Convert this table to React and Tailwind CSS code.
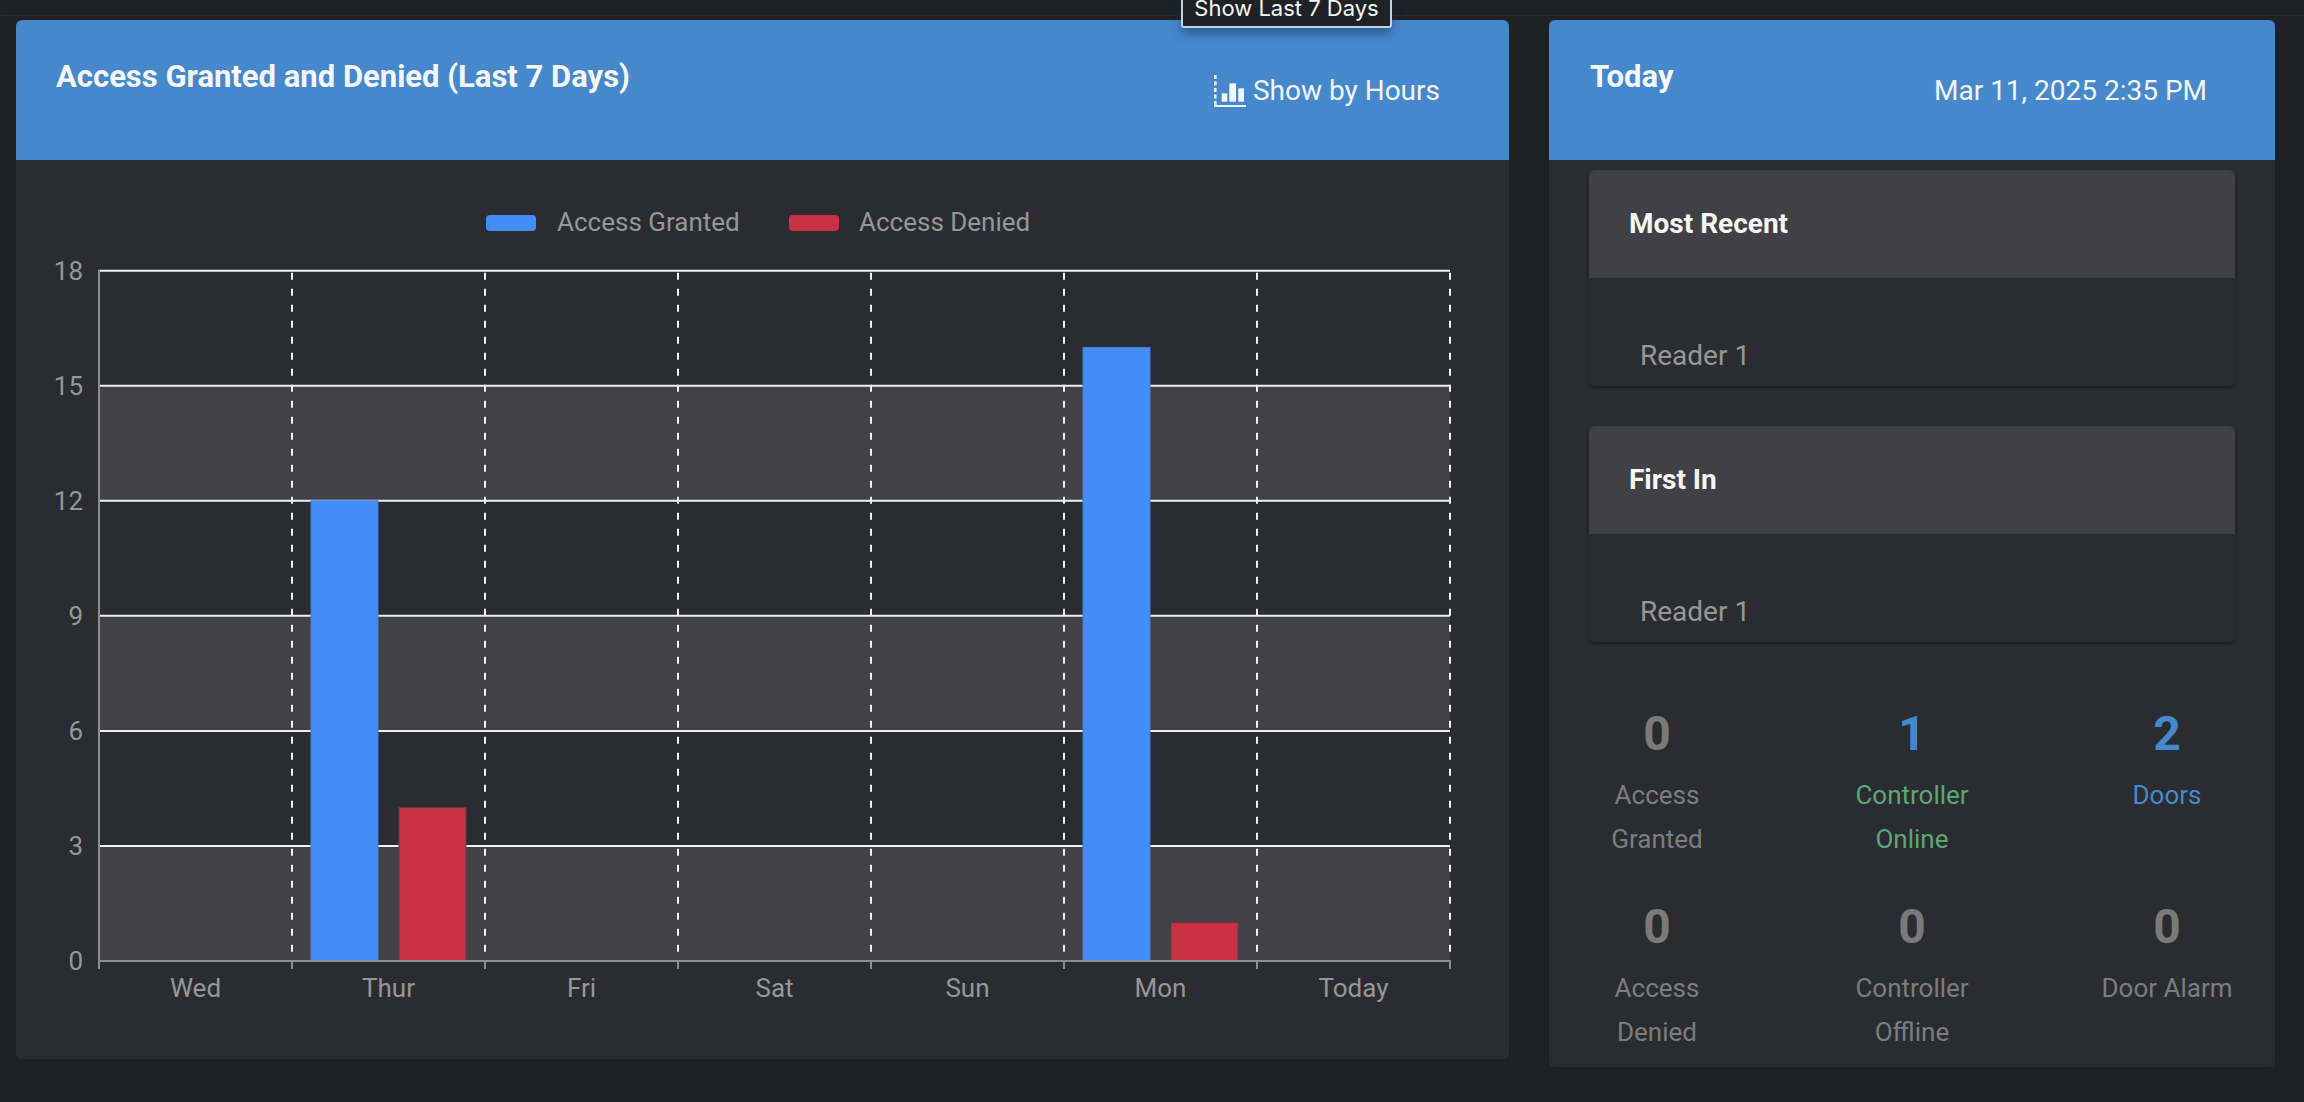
import React from "react";

const BLUE = "#458df6";
const RED = "#c93242";

const days = ["Wed", "Thur", "Fri", "Sat", "Sun", "Mon", "Today"];
const granted = [0, 12, 0, 0, 0, 16, 0];
const denied = [0, 4, 0, 0, 0, 1, 0];

// chart geometry, in page pixels
const X0 = 99;
const COL = 193;
const Y0 = 961;
const UNIT = 38.35;
const y = (v) => Y0 - v * UNIT;

const ChartIcon = () => (
  <svg width="32" height="32" viewBox="0 0 32 32" fill="none">
    <line x1="1.3" y1="0" x2="1.3" y2="31" stroke="#f2f4f7" strokeWidth="2.6" strokeDasharray="4 2.5" />
    <line x1="0" y1="31" x2="32" y2="31" stroke="#f2f4f7" strokeWidth="2" />
    <rect x="7.7" y="18.3" width="5.6" height="8.4" fill="#f2f4f7" />
    <rect x="15.3" y="8.3" width="6.7" height="18.4" fill="#f2f4f7" />
    <rect x="24.3" y="13.3" width="5.7" height="13.4" fill="#f2f4f7" />
  </svg>
);

const Chart = () => (
  <svg width="1493" height="899" viewBox="16 160 1493 899" className="block">
    {/* legend */}
    <rect x="486" y="215" width="50" height="16" rx="4" fill={BLUE} />
    <text x="557" y="231" fontSize="26" fill="#979797">Access Granted</text>
    <rect x="789" y="215" width="50" height="16" rx="4" fill={RED} />
    <text x="859" y="231" fontSize="26" fill="#979797">Access Denied</text>

    {/* bands */}
    {[15, 9, 3].map((v) => (
      <rect key={v} x={X0 + 1} y={y(v)} width={COL * 7 - 1} height={UNIT * 3} fill="#414146" />
    ))}

    {/* horizontal grid */}
    {[3, 6, 9, 12, 15, 18].map((v) => (
      <line key={v} x1={X0} x2={X0 + COL * 7} y1={y(v)} y2={y(v)} stroke="#f0f0f0" strokeWidth="2" />
    ))}

    {/* vertical dashed grid */}
    {[1, 2, 3, 4, 5, 6, 7].map((i) => (
      <line
        key={i}
        x1={X0 + i * COL}
        x2={X0 + i * COL}
        y1={y(18) + 2}
        y2={Y0}
        stroke="#f0f0f0"
        strokeWidth="2"
        strokeDasharray="7 9"
      />
    ))}

    {/* bars */}
    {days.map((d, i) => (
      <g key={d}>
        {granted[i] > 0 && (
          <rect
            x={X0 + i * COL + 19}
            y={y(granted[i])}
            width="67"
            height={granted[i] * UNIT}
            fill={BLUE}
            stroke="#3f7ed6"
            strokeWidth="1"
          />
        )}
        {denied[i] > 0 && (
          <rect
            x={X0 + i * COL + 107}
            y={y(denied[i])}
            width="67"
            height={denied[i] * UNIT}
            fill={RED}
            stroke="#6b3a44"
            strokeWidth="1"
          />
        )}
      </g>
    ))}

    {/* axes */}
    <line x1={X0} x2={X0} y1={y(18) - 1} y2={Y0 + 8} stroke="#8e8e8e" strokeWidth="2" />
    <line x1={X0} x2={X0 + COL * 7 + 1} y1={Y0} y2={Y0} stroke="#8e8e8e" strokeWidth="2" />
    {[1, 2, 3, 4, 5, 6, 7].map((i) => (
      <line key={i} x1={X0 + i * COL} x2={X0 + i * COL} y1={Y0} y2={Y0 + 8} stroke="#8e8e8e" strokeWidth="2" />
    ))}

    {/* y labels */}
    {[0, 3, 6, 9, 12, 15, 18].map((v) => (
      <text key={v} x="83" y={y(v) + 9} fontSize="26" fill="#979797" textAnchor="end">
        {v}
      </text>
    ))}

    {/* x labels */}
    {days.map((d, i) => (
      <text key={d} x={X0 + i * COL + COL / 2} y="997" fontSize="26" fill="#979797" textAnchor="middle">
        {d}
      </text>
    ))}
  </svg>
);

const MiniCard = ({ title, value }) => (
  <div className="rounded-[6px] overflow-hidden shadow-[0_2px_3px_rgba(0,0,0,0.35)]">
    <div className="h-[108px] bg-[#414045] flex items-center pl-[40px] text-[28px] font-bold text-[#f7f7f7]">
      {title}
    </div>
    <div className="h-[108px] bg-[#2b2c31] pt-[61px] pl-[51px] text-[28px] leading-[normal] text-[#979797]">
      {value}
    </div>
  </div>
);

const Stat = ({ value, label, numColor, labelColor }) => (
  <div className="flex flex-col items-center text-center">
    <span className={`text-[48px] font-bold leading-[56px] ${numColor}`}>{value}</span>
    <span className={`mt-[11px] text-[26px] leading-[44px] ${labelColor}`}>{label}</span>
  </div>
);

export default function App() {
  return (
    <div className="relative w-full h-[1102px] overflow-hidden bg-[#202125] font-['Roboto',sans-serif]">
      <div className="h-[15px]" />
      <div className="border-t border-dotted border-[#313237]" />

      <div className="flex items-start gap-[40px] pl-[16px] pt-[4px]">
        {/* LEFT CARD */}
        <section className="w-[1493px] rounded-[6px] overflow-hidden bg-[#2b2c31]">
          <header className="h-[140px] bg-[#4589cc] flex justify-between items-start pl-[40px] pr-[69px] pt-[38px]">
            <h2 className="text-[31px] font-bold leading-[normal] text-[#f5f7fa]">
              Access Granted and Denied (Last 7 Days)
            </h2>
            <button className="mt-[16px] flex items-center gap-[7px] text-[28px] leading-[normal] text-[#f2f4f7]">
              <ChartIcon />
              Show by Hours
            </button>
          </header>
          <Chart />
        </section>

        {/* RIGHT CARD */}
        <section className="w-[726px] rounded-[6px] overflow-hidden bg-[#2b2c31]">
          <header className="h-[140px] bg-[#4589cc] flex justify-between items-start pl-[41px] pr-[68px] pt-[38px]">
            <h2 className="text-[31px] font-bold leading-[normal] text-[#f5f7fa]">Today</h2>
            <span className="mt-[16px] text-[28px] leading-[normal] text-[#f2f4f7]">Mar 11, 2025 2:35 PM</span>
          </header>
          <div className="px-[40px] pt-[10px] pb-[13px]">
            <MiniCard title="Most Recent" value="Reader 1" />
            <div className="mt-[40px]">
              <MiniCard title="First In" value="Reader 1" />
            </div>
            <div className="mt-[64px] grid grid-cols-[136px_136px_136px] justify-between gap-y-[38px]">
              <Stat value="0" label="Access Granted" numColor="text-[#7a7a7a]" labelColor="text-[#7d7d7d]" />
              <Stat value="1" label="Controller Online" numColor="text-[#4589cc]" labelColor="text-[#5aa873]" />
              <Stat value="2" label="Doors" numColor="text-[#4589cc]" labelColor="text-[#4589cc]" />
              <Stat value="0" label="Access Denied" numColor="text-[#7a7a7a]" labelColor="text-[#7d7d7d]" />
              <Stat value="0" label="Controller Offline" numColor="text-[#7a7a7a]" labelColor="text-[#7d7d7d]" />
              <Stat value="0" label="Door Alarm" numColor="text-[#7a7a7a]" labelColor="text-[#7d7d7d]" />
            </div>
          </div>
        </section>
      </div>

      {/* tooltip over the toggle */}
      <div className="absolute left-[1181px] top-[-12px] w-[211px] h-[40px] flex items-center justify-center rounded-b-[3px] border-2 border-[#c3d1e2] bg-[#202125] shadow-[0_6px_10px_rgba(20,40,80,0.45)] font-['Inter',sans-serif] text-[22px] text-[#f4f4f4]">
        Show Last 7 Days
      </div>
    </div>
  );
}
